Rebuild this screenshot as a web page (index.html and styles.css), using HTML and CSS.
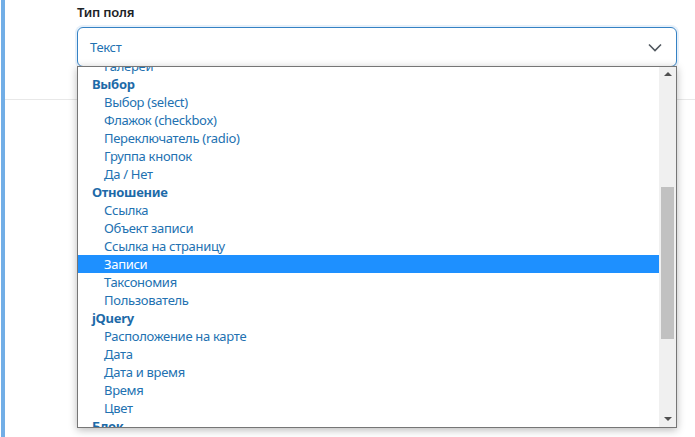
FILE: index.html
```html
<!DOCTYPE html>
<html lang="ru">
<head>
<meta charset="utf-8">
<link rel="stylesheet" href="styles.css">
</head>
<body>
<div class="panel">
  <div class="field">
    <label class="label">Тип поля</label>
    <div class="select">
      <span class="value">Текст</span>
      <svg class="chev" width="14" height="9" viewBox="0 0 14 9"><path d="M1 1.5 L7 7.5 L13 1.5" fill="none" stroke="#50575e" stroke-width="1.6"/></svg>
    </div>
  </div>
  <div class="rule"></div>
  <div class="dropdown">
    <ul class="list">
      <li class="opt">Галереи</li>
      <li class="grp">Выбор</li>
      <li class="opt">Выбор (select)</li>
      <li class="opt">Флажок (checkbox)</li>
      <li class="opt">Переключатель (radio)</li>
      <li class="opt">Группа кнопок</li>
      <li class="opt">Да / Нет</li>
      <li class="grp">Отношение</li>
      <li class="opt">Ссылка</li>
      <li class="opt">Объект записи</li>
      <li class="opt">Ссылка на страницу</li>
      <li class="opt sel">Записи</li>
      <li class="opt">Таксономия</li>
      <li class="opt">Пользователь</li>
      <li class="grp">jQuery</li>
      <li class="opt">Расположение на карте</li>
      <li class="opt">Дата</li>
      <li class="opt">Дата и время</li>
      <li class="opt">Время</li>
      <li class="opt">Цвет</li>
      <li class="grp">Блок</li>
    </ul>
    <div class="scrollbar">
      <span class="arrow up"></span>
      <div class="track"><div class="thumb"></div></div>
      <span class="arrow down"></span>
    </div>
  </div>
</div>
</body>
</html>
```
FILE: styles.css
```css
html, body {
  margin: 0;
  padding: 0;
  background: #fff;
}
body {
  font-family: "Noto Sans", "Open Sans", sans-serif;
  width: 695px;
  height: 437px;
  overflow: hidden;
  position: relative;
}
.panel {
  margin-left: 1px;
  border-left: 4px solid #72aee6;
  height: 437px;
  position: relative;
}
.field {
  padding-left: 72px;
  padding-top: 3px;
}
.label {
  display: block;
  font-size: 13px;
  font-weight: 600;
  letter-spacing: -0.2px;
  color: #1d2327;
  line-height: 18px;
  height: 24px;
}
.select {
  box-sizing: border-box;
  width: 600px;
  height: 40px;
  border: 1px solid #3582c4;
  border-radius: 6px;
  box-shadow: 0 0 0 2px rgba(114, 174, 230, 0.18);
  display: flex;
  align-items: center;
  justify-content: space-between;
  padding: 0 14px 0 12px;
}
.value {
  font-size: 13px;
  letter-spacing: -0.3px;
  color: #2271b1;
}
.chev {
  display: block;
}
.rule {
  margin-top: 32px;
  height: 1px;
  background: #e8e8e8;
}
.dropdown {
  position: absolute;
  left: 72px;
  top: 66px;
  width: 600px;
  height: 362px;
  box-sizing: border-box;
  border: 1px solid #767676;
  background: #fff;
  box-shadow: 0 2px 8px rgba(0, 0, 0, 0.28);
  display: flex;
  overflow: hidden;
}
.list {
  list-style: none;
  margin: -10px 0 0 0;
  padding: 0;
  flex: 1;
  font-size: 13px;
  letter-spacing: -0.3px;
  line-height: 18px;
  color: #2271b1;
}
.list li {
  height: 18px;
  white-space: nowrap;
}
.grp {
  font-weight: 700;
  padding-left: 14px;
  color: #1d6aa8;
}
.opt {
  padding-left: 26px;
}
.sel {
  background: #1e90ff;
  color: #fff;
}
.scrollbar {
  width: 17px;
  background: #f0f0f0;
  display: flex;
  flex-direction: column;
  align-items: center;
}
.arrow {
  width: 0;
  height: 0;
  border-left: 4px solid transparent;
  border-right: 4px solid transparent;
  margin: 5px 0;
}
.up {
  border-bottom: 4px solid #505050;
  margin-top: 5px;
}
.down {
  border-top: 4px solid #505050;
  margin-bottom: 6px;
}
.track {
  flex: 1;
  width: 100%;
  padding-top: 106px;
  box-sizing: border-box;
  display: flex;
  justify-content: center;
}
.thumb {
  width: 13px;
  height: 152px;
  background: #c1c1c1;
}
```
